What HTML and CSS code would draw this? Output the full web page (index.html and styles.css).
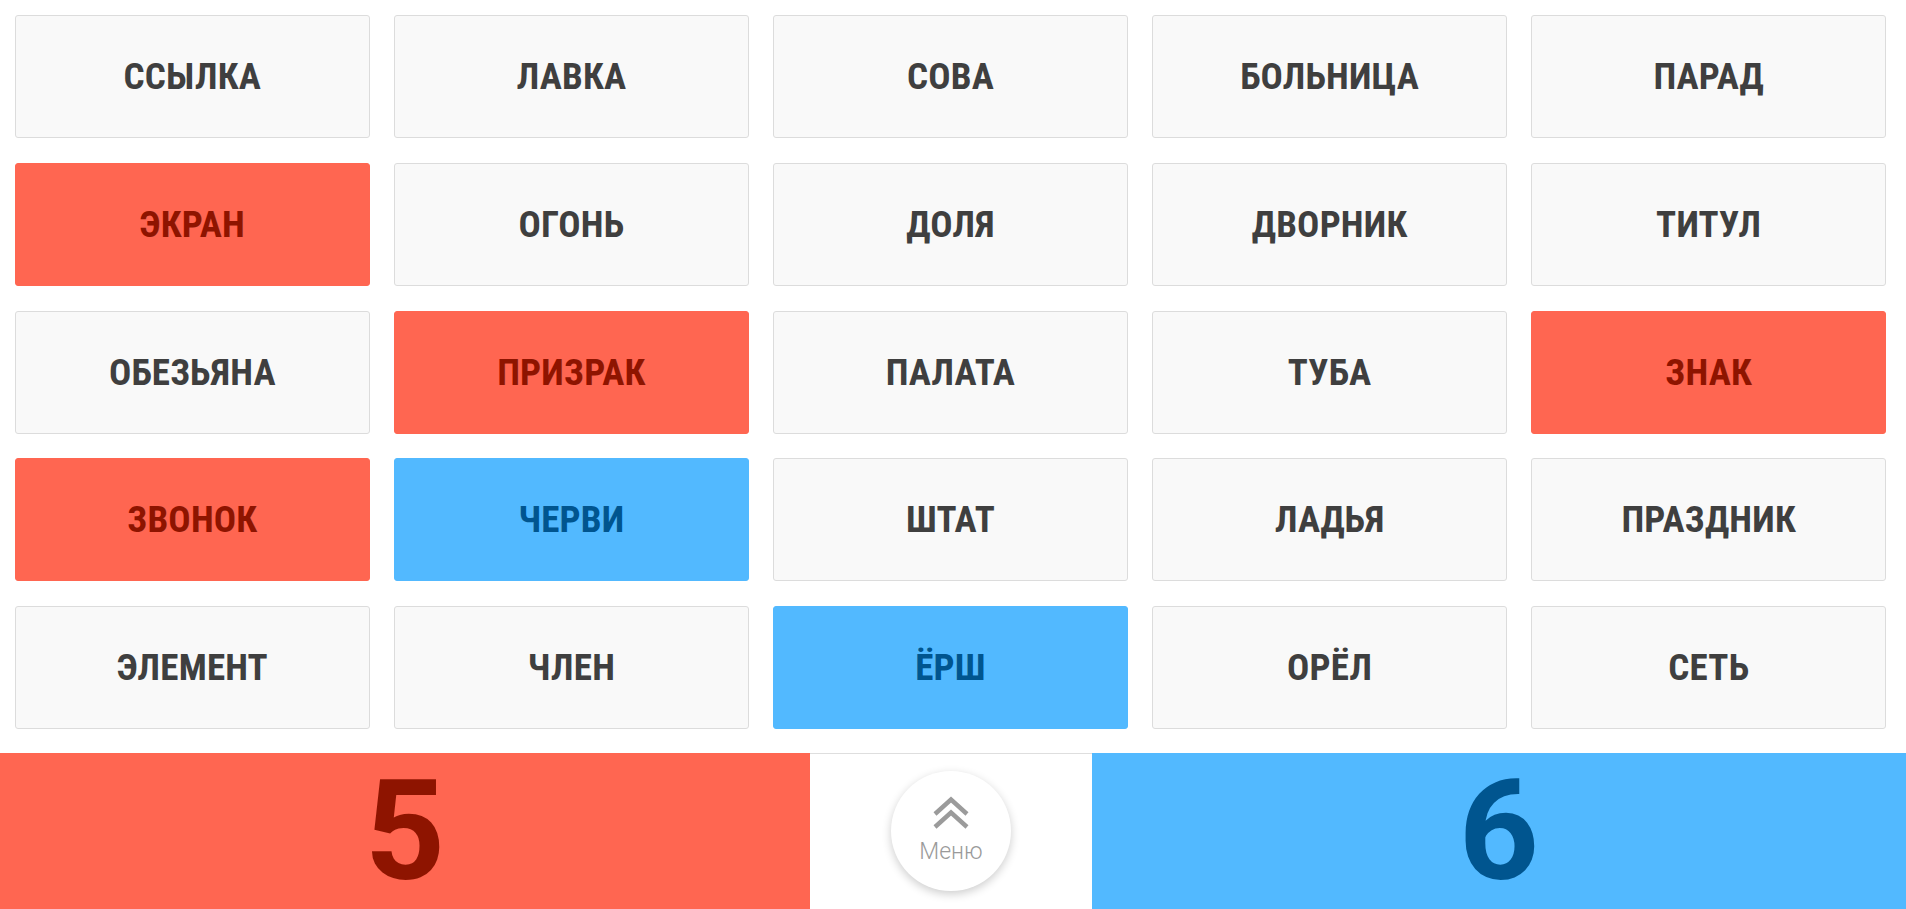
FILE: index.html
```html
<!DOCTYPE html>
<html lang="ru">
<head>
<meta charset="utf-8">
<title>Кодовые имена</title>
<link rel="stylesheet" href="styles.css">
</head>
<body>
<main class="board">
  <div class="card">ССЫЛКА</div>
  <div class="card">ЛАВКА</div>
  <div class="card">СОВА</div>
  <div class="card">БОЛЬНИЦА</div>
  <div class="card">ПАРАД</div>

  <div class="card card-red">ЭКРАН</div>
  <div class="card">ОГОНЬ</div>
  <div class="card">ДОЛЯ</div>
  <div class="card">ДВОРНИК</div>
  <div class="card">ТИТУЛ</div>

  <div class="card">ОБЕЗЬЯНА</div>
  <div class="card card-red">ПРИЗРАК</div>
  <div class="card">ПАЛАТА</div>
  <div class="card">ТУБА</div>
  <div class="card card-red">ЗНАК</div>

  <div class="card card-red">ЗВОНОК</div>
  <div class="card card-blue">ЧЕРВИ</div>
  <div class="card">ШТАТ</div>
  <div class="card">ЛАДЬЯ</div>
  <div class="card">ПРАЗДНИК</div>

  <div class="card">ЭЛЕМЕНТ</div>
  <div class="card">ЧЛЕН</div>
  <div class="card card-blue">ЁРШ</div>
  <div class="card">ОРЁЛ</div>
  <div class="card">СЕТЬ</div>
</main>

<footer class="scorebar">
  <div class="score score-red"><span class="score-num">5</span></div>
  <div class="menu-cell">
    <button class="menu-btn" type="button">
      <svg class="chevrons" width="36" height="34" viewBox="0 0 36 34" aria-hidden="true">
        <polyline points="2,18 18,3.5 34,18" />
        <polyline points="2,31 18,16.5 34,31" />
      </svg>
      <span class="menu-label">Меню</span>
    </button>
  </div>
  <div class="score score-blue"><span class="score-num">6</span></div>
</footer>
</body>
</html>
```
FILE: styles.css
```css
html, body {
  margin: 0;
  padding: 0;
  background: #ffffff;
}

body {
  font-family: "Roboto Condensed", Roboto, "Liberation Sans", sans-serif;
  overflow: hidden;
}

.board {
  display: grid;
  grid-template-columns: repeat(5, 1fr);
  grid-auto-rows: 123px;
  column-gap: 24.5px;
  row-gap: 24.75px;
  padding: 15px 20px 24px 15px;
}

.card {
  display: flex;
  align-items: center;
  justify-content: center;
  background: #f9f9f9;
  border: 1px solid #dcdcdc;
  border-radius: 3px;
  color: #3f3f3f;
  font-size: 37px;
  font-weight: 700;
  text-transform: uppercase;
  letter-spacing: 0.2px;
}

.card-red {
  background: #ff6651;
  border-color: #ff6651;
  color: #8e1400;
}

.card-blue {
  background: #52b9ff;
  border-color: #52b9ff;
  color: #00558f;
}

.scorebar {
  display: grid;
  grid-template-columns: 810px 282px 1fr;
  height: 156px;
}

.score {
  display: flex;
  align-items: center;
  justify-content: center;
  overflow: visible;
}

.score-num {
  display: block;
  font-family: Roboto, "Liberation Sans", sans-serif;
  font-weight: 700;
  font-size: 140px;
  line-height: 150px;
}

.score-red {
  background: #ff6651;
  color: #8e1400;
}

.score-blue {
  background: #52b9ff;
  color: #00558f;
}

.menu-cell {
  display: flex;
  align-items: center;
  justify-content: center;
  border-top: 1px solid #dedede;
  background: #ffffff;
}

.menu-btn {
  display: flex;
  flex-direction: column;
  align-items: center;
  box-sizing: border-box;
  width: 120px;
  height: 120px;
  padding: 25px 0 0;
  margin: 0 0 1px;
  border: none;
  border-radius: 50%;
  background: #ffffff;
  box-shadow: 0 3px 10px rgba(0, 0, 0, 0.2);
  cursor: pointer;
}

.chevrons {
  display: block;
}

.chevrons polyline {
  fill: none;
  stroke: #9b9b9b;
  stroke-width: 4.4;
}

.menu-label {
  display: block;
  margin-top: 10px;
  font-family: Roboto, "Liberation Sans", sans-serif;
  font-weight: 300;
  font-size: 23px;
  line-height: 1;
  color: #9a9a9a;
}
```
